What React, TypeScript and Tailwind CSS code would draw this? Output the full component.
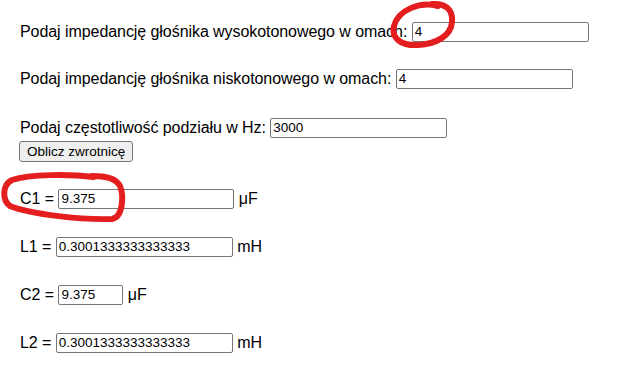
const inputCls =
  "h-[20px] border border-[#767676] rounded-[2px] px-[2px] text-[13.5px] tracking-normal text-black bg-white outline-none";

function Field({ label, value, width, unit }: { label: string; value: string; width: string; unit?: string }) {
  return (
    <div className="flex items-center h-[20px] whitespace-pre">
      <span className="tracking-[-0.065px]">{label} </span>
      <input readOnly value={value} className={`${inputCls} ${width}`} />
      {unit && <span> {unit}</span>}
    </div>
  );
}

export default function App() {
  return (
    <div
      className="relative w-[617px] h-[380px] bg-white text-black text-[16px] overflow-hidden"
      style={{ fontFamily: '"Liberation Sans", Arial, sans-serif' }}
    >
      <div className="pl-5 flex flex-col items-start">
        <div className="mt-[22px]">
          <Field label="Podaj impedancję głośnika wysokotonowego w omach:" value="4" width="w-[177px]" />
        </div>
        <div className="mt-[27px]">
          <Field label="Podaj impedancję głośnika niskotonowego w omach:" value="4" width="w-[177px]" />
        </div>
        <div className="mt-[29px]">
          <Field label="Podaj częstotliwość podziału w Hz:" value="3000" width="w-[177px]" />
        </div>
        <button className="mt-[3px] -ml-px h-[21px] px-[7px] border border-[#767676] rounded-[3px] bg-[#efefef] text-[13.5px] leading-none">
          Oblicz zwrotnicę
        </button>
        <div className="mt-[27px]">
          <Field label="C1 =" value="9.375" width="w-[176px]" unit="μF" />
        </div>
        <div className="mt-[28px]">
          <Field label="L1 =" value="0.3001333333333333" width="w-[177px]" unit="mH" />
        </div>
        <div className="mt-[28px]">
          <Field label="C2 =" value="9.375" width="w-[65px]" unit="μF" />
        </div>
        <div className="mt-[28px]">
          <Field label="L2 =" value="0.3001333333333333" width="w-[177px]" unit="mH" />
        </div>
      </div>

      <svg className="absolute inset-0 pointer-events-none" width="617" height="380">
        <g fill="none" stroke="#e41e1e" strokeWidth="6" strokeLinecap="round" strokeLinejoin="round">
          <path d="M 438 6 C 420 1, 398 10, 394 26 C 391 39, 402 46, 418 45 C 436 44, 451 36, 452 22 C 453 10, 446 3, 432 4" />
          <path d="M 94 177 C 70 174, 30 174, 12 180 C 2 185, 2 200, 10 206 C 30 214, 80 220, 112 219 C 123 217, 124 196, 120 186 C 116 178, 106 176, 92 176" />
        </g>
      </svg>
    </div>
  );
}
